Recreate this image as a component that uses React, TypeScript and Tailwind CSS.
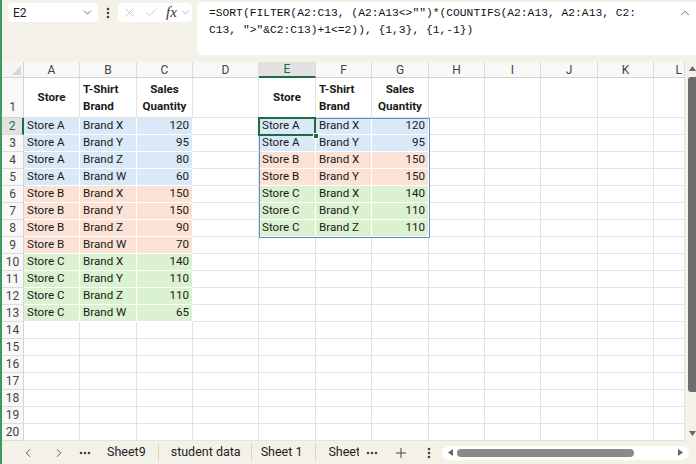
import { ChevronDown, ChevronUp, ChevronLeft, ChevronRight, X, Check, Plus } from "lucide-react";

const COLS = [
  { key: "A", w: "w-[56px]" },
  { key: "B", w: "w-[57px]" },
  { key: "C", w: "w-[56px]" },
  { key: "D", w: "w-[66px]" },
  { key: "E", w: "w-[57px]" },
  { key: "F", w: "w-[56px]" },
  { key: "G", w: "w-[57px]" },
  { key: "H", w: "w-[56px]" },
  { key: "I", w: "w-[56px]" },
  { key: "J", w: "w-[57px]" },
  { key: "K", w: "w-[56px]" },
  { key: "L", w: "w-[31px]" },
];

type Fill = "blue" | "pink" | "green";
type Row = [string, string, number, Fill];

const source: Row[] = [
  ["Store A", "Brand X", 120, "blue"],
  ["Store A", "Brand Y", 95, "blue"],
  ["Store A", "Brand Z", 80, "blue"],
  ["Store A", "Brand W", 60, "blue"],
  ["Store B", "Brand X", 150, "pink"],
  ["Store B", "Brand Y", 150, "pink"],
  ["Store B", "Brand Z", 90, "pink"],
  ["Store B", "Brand W", 70, "pink"],
  ["Store C", "Brand X", 140, "green"],
  ["Store C", "Brand Y", 110, "green"],
  ["Store C", "Brand Z", 110, "green"],
  ["Store C", "Brand W", 65, "green"],
];

// spilled result of the SORT(FILTER(...)) formula in E2
const result: Row[] = [
  ["Store A", "Brand X", 120, "blue"],
  ["Store A", "Brand Y", 95, "blue"],
  ["Store B", "Brand X", 150, "pink"],
  ["Store B", "Brand Y", 150, "pink"],
  ["Store C", "Brand X", 140, "green"],
  ["Store C", "Brand Y", 110, "green"],
  ["Store C", "Brand Z", 110, "green"],
];

const fillClass: Record<Fill, string> = {
  blue: "bg-[#dae9f8] border-white",
  pink: "bg-[#fbe2d5] border-white",
  green: "bg-[#daf2d0] border-white",
};

function Dots() {
  return (
    <svg width="12" height="4" viewBox="0 0 12 4">
      <circle cx="2" cy="2" r="1.3" fill="#444" />
      <circle cx="6" cy="2" r="1.3" fill="#444" />
      <circle cx="10" cy="2" r="1.3" fill="#444" />
    </svg>
  );
}

function VDots() {
  return (
    <svg width="4" height="12" viewBox="0 0 4 12">
      <circle cx="2" cy="2" r="1.3" fill="#444" />
      <circle cx="2" cy="6" r="1.3" fill="#444" />
      <circle cx="2" cy="10" r="1.3" fill="#444" />
    </svg>
  );
}

function Cell({
  w,
  children,
  fill,
  align = "left",
}: {
  w: string;
  children?: React.ReactNode;
  fill?: Fill;
  align?: "left" | "right";
}) {
  return (
    <div
      className={`${w} h-full shrink-0 border-r border-b flex items-center whitespace-nowrap overflow-hidden ${
        fill ? fillClass[fill] : "bg-white border-[#e3e3e3]"
      } ${align === "right" ? "justify-end pr-[3px]" : "pl-[3px]"}`}
    >
      {children}
    </div>
  );
}

function HeaderCell({ w, children, center }: { w: string; children: React.ReactNode; center?: boolean }) {
  return (
    <div
      className={`${w} h-full shrink-0 border-r border-b border-[#e3e3e3] bg-white flex items-center font-bold leading-[17px] ${
        center ? "justify-center text-center" : "pl-[3px]"
      }`}
    >
      {children}
    </div>
  );
}

export default function App() {
  const rows = Array.from({ length: 19 }, (_, i) => i + 2);

  return (
    <div className="w-[696px] h-[464px] overflow-hidden bg-[#f4f1e9] border-l-2 border-[#3c9a5f] flex flex-col font-['Roboto',sans-serif] text-[#1a1a1a]">
      {/* formula bar */}
      <div className="h-[62px] shrink-0 flex items-start">
        <div className="ml-[6px] mt-[3px] w-[90px] h-[19px] bg-white rounded-[4px] flex items-center justify-between pl-[5px] pr-[4px] text-[12px]">
          <span>E2</span>
          <ChevronDown size={13} strokeWidth={1.6} className="text-[#555]" />
        </div>
        <div className="w-[20px] h-[25px] flex items-center justify-center">
          <VDots />
        </div>
        <div className="mt-[3px] w-[74px] h-[19px] bg-white rounded-[4px] flex items-center pl-[4px] gap-[3px]">
          <X size={15} strokeWidth={1.1} className="text-[#b5b5b5]" />
          <Check size={15} strokeWidth={1.1} className="text-[#b5b5b5] ml-[4px]" />
          <span className="ml-[4px] font-['Liberation_Serif',serif] italic text-[15px] text-[#333] leading-none">fx</span>
          <ChevronDown size={11} strokeWidth={1.4} className="text-[#888]" />
        </div>
        <div className="ml-[5px] mt-[2px] flex-1 h-[53px] bg-white rounded-l-[5px] relative pl-[12px] pt-[3px] font-['Liberation_Mono',monospace] text-[11.3px] leading-[17px] text-[#111] whitespace-pre">
          <div>{'=SORT(FILTER(A2:C13, (A2:A13<>"")*(COUNTIFS(A2:A13, A2:A13, C2:'}</div>
          <div>{'C13, ">"&C2:C13)+1<=2)), {1,3}, {1,-1})'}</div>
          <ChevronUp size={14} strokeWidth={1.5} className="absolute right-[4px] top-[4px] text-[#555]" />
        </div>
      </div>

      {/* grid */}
      <div className="h-[379px] shrink-0 flex">
        <div className="w-[683px] shrink-0 relative bg-white text-[11.6px] overflow-hidden">
          {/* column headers */}
          <div className="h-[16px] flex">
            <div className="w-[22px] h-full shrink-0 bg-[#f5f5f5] border-r border-b border-[#d4d4d4] flex items-end justify-end p-[2px]">
              <svg width="9" height="9" viewBox="0 0 9 9">
                <path d="M9 0 L9 9 L0 9 Z" fill="#d6d6d6" />
              </svg>
            </div>
            {COLS.map((c) => (
              <div
                key={c.key}
                className={`${c.w} h-full shrink-0 border-r border-[#dcdcdc] flex items-center justify-center text-[12px] ${
                  c.key === "E"
                    ? "bg-[#e2e2e2] border-b-2 border-b-[#1e6c41] text-[#1e6c41]"
                    : "bg-[#f8f8f8] border-b border-b-[#d4d4d4] text-[#444]"
                } ${c.key === "L" ? "justify-end pr-[2px]" : ""}`}
              >
                {c.key}
              </div>
            ))}
          </div>

          {/* row 1 */}
          <div className="h-[40px] flex">
            <div className="w-[22px] h-full shrink-0 bg-[#f8f8f8] border-r border-b border-[#d4d4d4] flex items-end justify-center pb-[1px] text-[12px] text-[#444]">
              1
            </div>
            <HeaderCell w="w-[56px]" center>Store</HeaderCell>
            <HeaderCell w="w-[57px]">
              <div>T-Shirt<br />Brand</div>
            </HeaderCell>
            <HeaderCell w="w-[56px]" center>
              <div>Sales<br />Quantity</div>
            </HeaderCell>
            <Cell w="w-[66px]" />
            <HeaderCell w="w-[57px]" center>Store</HeaderCell>
            <HeaderCell w="w-[56px]">
              <div>T-Shirt<br />Brand</div>
            </HeaderCell>
            <HeaderCell w="w-[57px]" center>
              <div>Sales<br />Quantity</div>
            </HeaderCell>
            <Cell w="w-[56px]" />
            <Cell w="w-[56px]" />
            <Cell w="w-[57px]" />
            <Cell w="w-[56px]" />
            <Cell w="w-[31px]" />
          </div>

          {/* rows 2..20 */}
          {rows.map((r) => {
            const s = source[r - 2];
            const t = result[r - 2];
            return (
              <div key={r} className="h-[17px] flex">
                <div
                  className={`w-[22px] h-full shrink-0 border-b border-[#dcdcdc] flex items-center justify-center text-[12px] ${
                    r === 2
                      ? "bg-[#e2e2e2] border-r-2 border-r-[#1e6c41] text-[#1e6c41]"
                      : "bg-[#f8f8f8] border-r border-r-[#d4d4d4] text-[#444]"
                  }`}
                >
                  {r}
                </div>
                <Cell w="w-[56px]" fill={s?.[3]}>{s?.[0]}</Cell>
                <Cell w="w-[57px]" fill={s?.[3]}>{s?.[1]}</Cell>
                <Cell w="w-[56px]" fill={s?.[3]} align="right">{s?.[2]}</Cell>
                <Cell w="w-[66px]" />
                <Cell w="w-[57px]" fill={t?.[3]}>{t?.[0]}</Cell>
                <Cell w="w-[56px]" fill={t?.[3]}>{t?.[1]}</Cell>
                <Cell w="w-[57px]" fill={t?.[3]} align="right">{t?.[2]}</Cell>
                <Cell w="w-[56px]" />
                <Cell w="w-[56px]" />
                <Cell w="w-[57px]" />
                <Cell w="w-[56px]" />
                <Cell w="w-[31px]" />
              </div>
            );
          })}

          {/* spill range outline */}
          <div className="absolute left-[257px] top-[56px] w-[171px] h-[120px] border border-[#5b8ed6] pointer-events-none" />
          {/* active cell */}
          <div className="absolute left-[256px] top-[55px] w-[58px] h-[19px] border-2 border-[#1e6c41] pointer-events-none" />
          <div className="absolute left-[311px] top-[71px] w-[6px] h-[6px] bg-[#1e6c41] border border-white" />
        </div>

        {/* vertical scrollbar */}
        <div className="flex-1 relative">
          <svg className="absolute left-[4px] top-[4px]" width="7" height="5" viewBox="0 0 7 5">
            <path d="M3.5 0 L7 5 L0 5 Z" fill="#666" />
          </svg>
          <div className="absolute left-[3px] right-0 top-[15px] h-[315px] bg-[#6e6e6e] rounded-l-[3px]" />
          <svg className="absolute left-[4px] top-[369px]" width="7" height="5" viewBox="0 0 7 5">
            <path d="M0 0 L7 0 L3.5 5 Z" fill="#666" />
          </svg>
        </div>
      </div>

      {/* sheet tabs */}
      <div className="flex-1 flex items-center text-[12.5px] text-[#222]">
        <div className="w-[50px] flex items-center pl-[19px]">
          <ChevronLeft size={14} strokeWidth={1.5} className="text-[#444]" />
        </div>
        <ChevronRight size={14} strokeWidth={1.5} className="text-[#444]" />
        <div className="ml-[13px]">
          <Dots />
        </div>
        <div className="ml-[16px] pr-[12px] border-r border-[#d8d4ca] h-[17px] flex items-center">Sheet9</div>
        <div className="pl-[12px] pr-[10px] border-r border-[#d8d4ca] h-[17px] flex items-center">student data</div>
        <div className="pl-[9px] pr-[13px] border-r border-[#d8d4ca] h-[17px] flex items-center">Sheet 1</div>
        <div className="ml-[12px] w-[31px] overflow-hidden whitespace-nowrap">Sheet1</div>
        <div className="ml-[7px]">
          <Dots />
        </div>
        <Plus size={16} strokeWidth={1.5} className="ml-[15px] text-[#444]" />
        <div className="ml-[18px]">
          <VDots />
        </div>
        <div className="ml-[11px] w-[247px] h-[14px] bg-white rounded-full flex items-center px-[6px] gap-[4px]">
          <svg width="5" height="7" viewBox="0 0 5 7">
            <path d="M5 0 L5 7 L0 3.5 Z" fill="#666" />
          </svg>
          <div className="w-[177px] h-[8px] bg-[#8a8a8a] rounded-full" />
          <div className="flex-1" />
          <svg width="5" height="7" viewBox="0 0 5 7">
            <path d="M0 0 L5 3.5 L0 7 Z" fill="#666" />
          </svg>
        </div>
      </div>
    </div>
  );
}
